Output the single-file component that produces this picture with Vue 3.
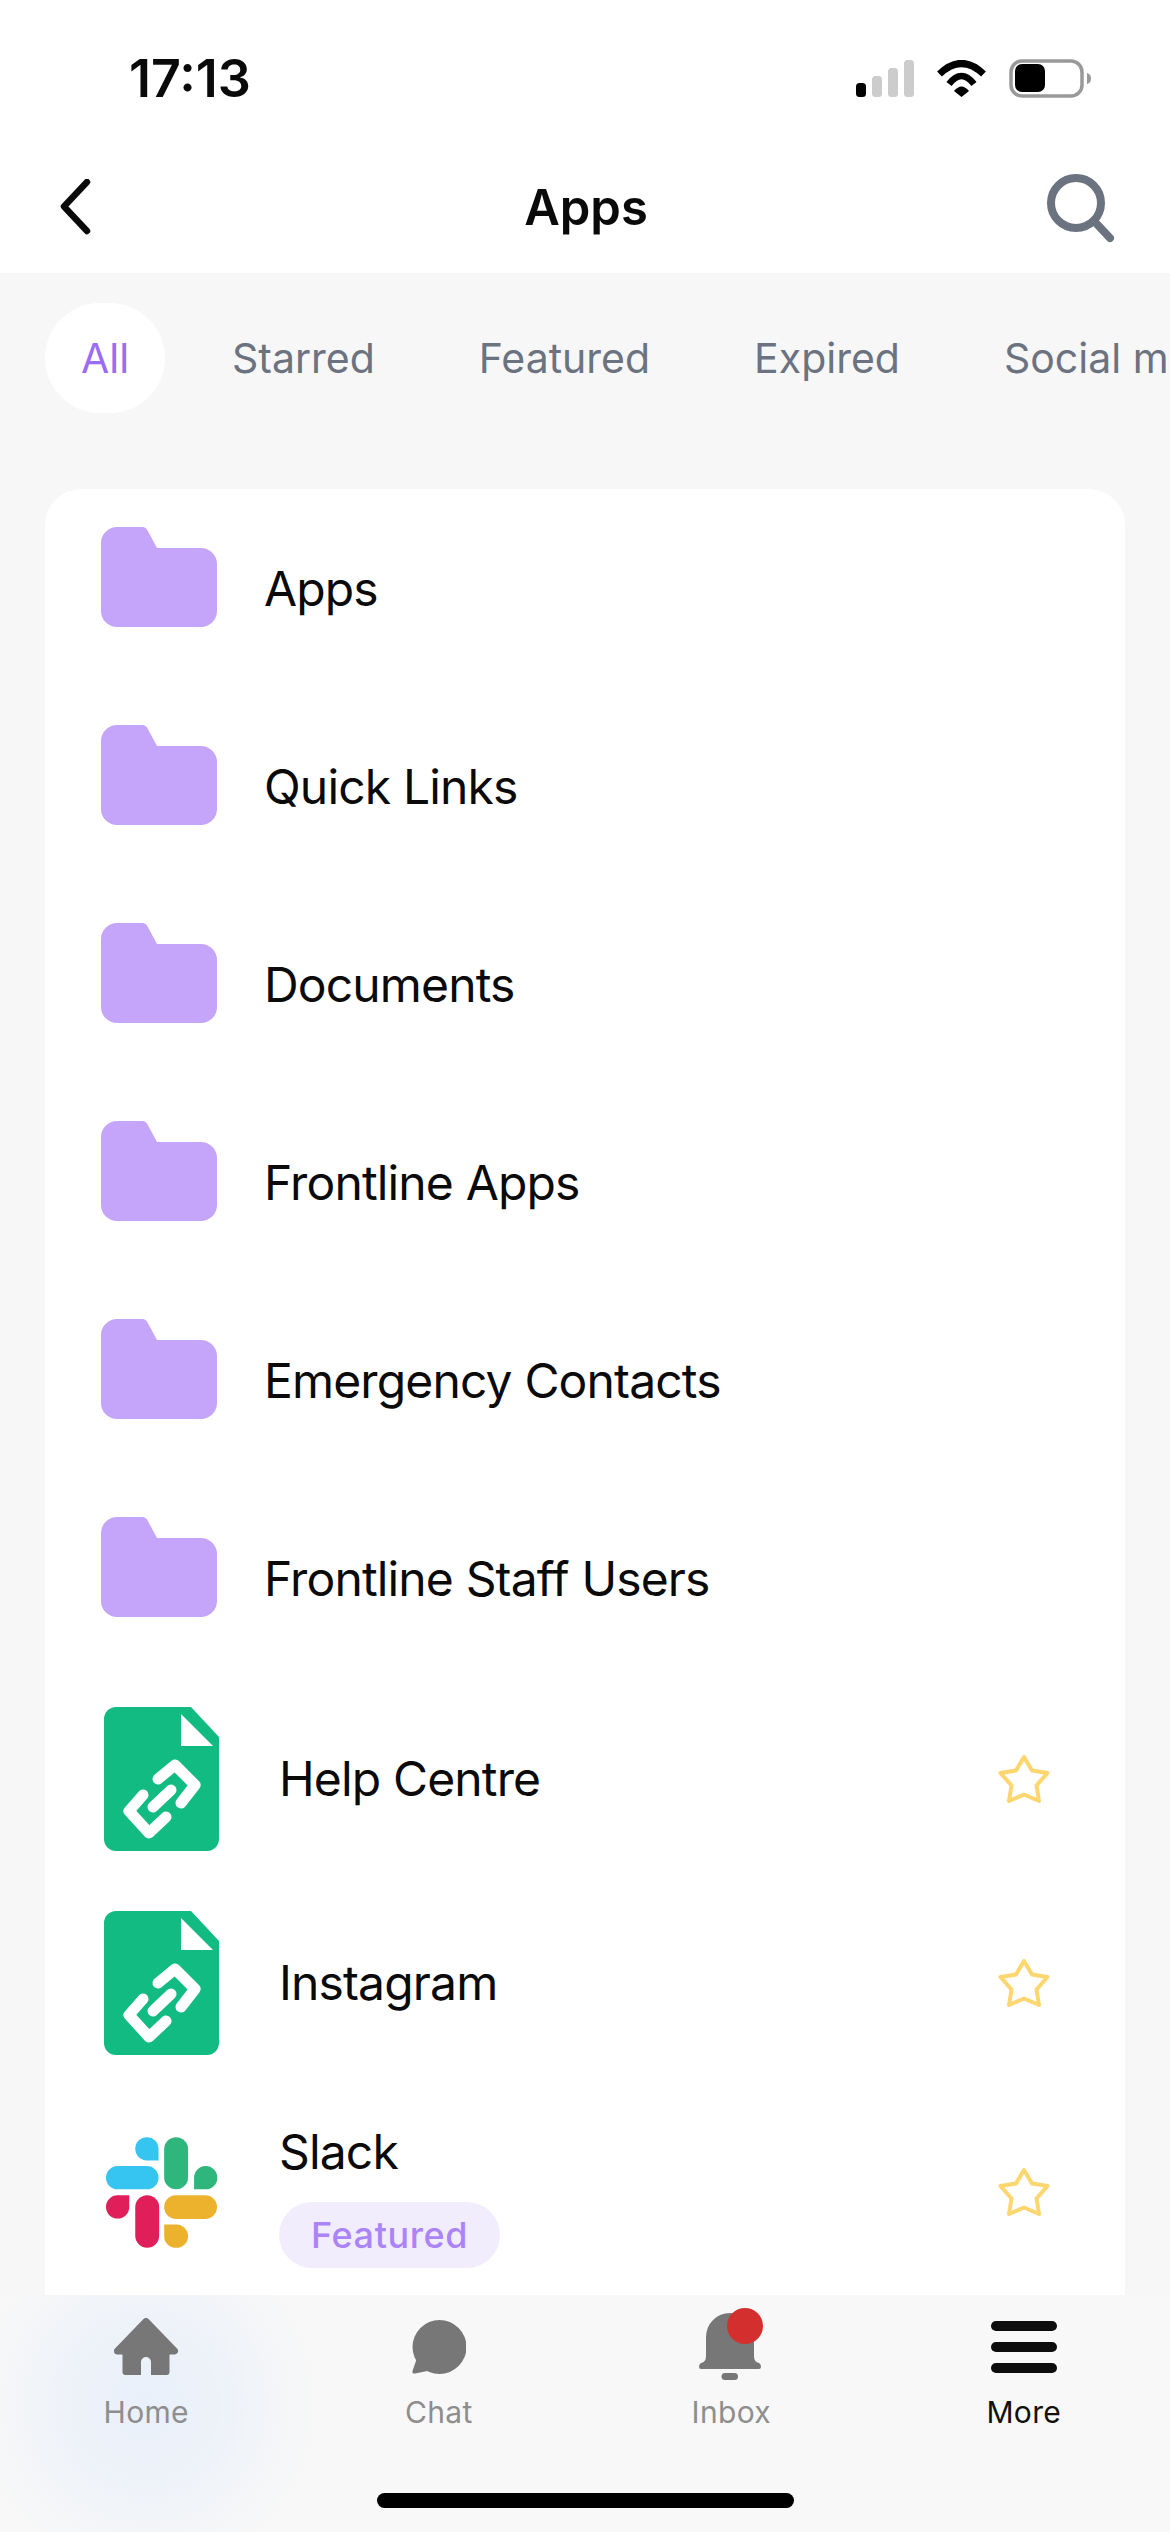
<template>
  <div class="screen">
    <div class="status">
      <span class="time">17:13</span>
      <div class="status-icons">
        <svg width="58" height="37" viewBox="0 0 58 37">
          <rect x="0" y="23" width="10" height="14" rx="3.5" fill="#000" />
          <rect x="16" y="16" width="10" height="21" rx="3.5" fill="#ccc" />
          <rect x="32" y="8" width="10" height="29" rx="3.5" fill="#ccc" />
          <rect x="48" y="0" width="10" height="37" rx="3.5" fill="#ccc" />
        </svg>
        <svg width="51" height="37" viewBox="0 0 51 37">
          <path d="M3.5 14Q25.5 -7 47.5 14" fill="none" stroke="#000" stroke-width="7" />
          <path d="M13 24Q25.5 8 38 24" fill="none" stroke="#000" stroke-width="6.5" />
          <path d="M18 31Q25.5 22 33 31L25.5 37Z" fill="#000" />
        </svg>
        <svg width="82" height="39" viewBox="0 0 82 39">
          <rect x="2" y="2" width="71" height="35" rx="11" fill="none" stroke="#999" stroke-width="3.5" />
          <rect x="6" y="5" width="30" height="28" rx="7" fill="#000" />
          <path d="M78 14Q82 15 82 19.500Q82 24 78 25Z" fill="#999" />
        </svg>
      </div>
    </div>

    <header class="topbar">
      <svg class="back" width="32" height="56" viewBox="0 0 32 56">
        <path d="M27 3L4 27.500L27 52" fill="none" stroke="#0a0a0a" stroke-width="6.500" stroke-linecap="round" stroke-linejoin="round" />
      </svg>
      <h1>Apps</h1>
      <svg class="search" width="72" height="72" viewBox="0 0 72 72">
        <circle cx="32" cy="32" r="25" fill="none" stroke="#6b7280" stroke-width="8" />
        <path d="M50 50L66 67" fill="none" stroke="#6b7280" stroke-width="8" stroke-linecap="round" />
      </svg>
    </header>

    <div class="tabs">
      <span v-for="(t, i) in tabs" :key="t" class="tab" :class="{ active: i === 0 }">{{ t }}</span>
    </div>

    <main class="card">
      <div v-for="f in folders" :key="f" class="row folder-row">
        <svg class="folder" width="116" height="100" viewBox="0 0 116 100">
          <path d="M16 0H42Q44.500 0 46 2.500L56 21H100A16 16 0 0 1 116 37V84A16 16 0 0 1 100 100H16A16 16 0 0 1 0 84V16A16 16 0 0 1 16 0Z" fill="#c4a5f9" />
        </svg>
        <span class="name">{{ f }}</span>
      </div>

      <div v-for="l in links" :key="l" class="row link-row">
        <svg width="115" height="144" viewBox="0 0 115 144">
          <path d="M12 0H87L115 30V132A12 12 0 0 1 103 144H12A12 12 0 0 1 0 132V12A12 12 0 0 1 12 0Z" fill="#12bb82" />
          <path d="M77 7V39H109Z" fill="#fff" />
          <g fill="none" stroke="#fff" stroke-width="11" stroke-linecap="round" stroke-linejoin="round">
            <path d="M54 72L71 58L91 78L77 96" />
            <path d="M39 88L25 104L45 126L62 110" />
            <path d="M67 83L49 100" />
          </g>
        </svg>
        <span class="name">{{ l }}</span>
        <svg class="star" width="54" height="52" viewBox="0 0 54 52">
          <path d="M27 4L35 17.500L50.500 20L39.500 32.500L42 48L27 41.500L12 48L14.500 32.500L3.500 20L19 17.500Z" fill="none" stroke="#fdd66f" stroke-width="4" stroke-linejoin="round" />
        </svg>
      </div>

      <div class="row slack-row">
        <svg class="slack" width="115" height="111" viewBox="74 110 346 333">
          <path d="M203 110A35 35 0 0 0 203 180H238V145A35 35 0 0 0 203 110Z" fill="#36c5f0" />
          <rect x="80" y="197" width="158" height="70" rx="35" fill="#36c5f0" />
          <rect x="255" y="110" width="72" height="157" rx="36" fill="#2eb67d" />
          <path d="M380 197A35 35 0 0 0 345 232V267H380A35 35 0 0 0 380 197Z" fill="#2eb67d" />
          <path d="M115 285A35 35 0 1 0 150 320V285Z" fill="#e01e5a" />
          <rect x="168" y="285" width="72" height="158" rx="36" fill="#e01e5a" />
          <rect x="255" y="285" width="159" height="71" rx="35.500" fill="#ecb22e" />
          <path d="M255 373V408A36 35 0 1 0 291 373Z" fill="#ecb22e" />
        </svg>
        <div class="slack-text">
          <span class="name">Slack</span>
          <span class="badge">Featured</span>
        </div>
        <svg class="star" width="54" height="52" viewBox="0 0 54 52">
          <path d="M27 4L35 17.500L50.500 20L39.500 32.500L42 48L27 41.500L12 48L14.500 32.500L3.500 20L19 17.500Z" fill="none" stroke="#fdd66f" stroke-width="4" stroke-linejoin="round" />
        </svg>
      </div>
    </main>

    <nav class="nav">
      <div class="nav-items">
        <div class="nav-item">
          <div class="nav-icon">
            <svg width="66" height="58" viewBox="0 0 66 58">
              <path d="M4.500 33L33 3.500L61.500 33Z" fill="#777" stroke="#777" stroke-width="7" stroke-linejoin="round" />
              <path d="M9.500 26H56.500V54A3 3 0 0 1 53.500 57H38V44A5 5 0 0 0 28 44V57H12.500A3 3 0 0 1 9.500 54Z" fill="#777" />
            </svg>
          </div>
          <span>Home</span>
        </div>
        <div class="nav-item">
          <div class="nav-icon">
            <svg width="54" height="54" viewBox="0 0 54 54">
              <ellipse cx="27.500" cy="27" rx="27" ry="27" fill="#777" />
              <path d="M5 38L0.500 51Q0 54 3 53.500L18 50.500Z" fill="#777" />
            </svg>
          </div>
          <span>Chat</span>
        </div>
        <div class="nav-item">
          <div class="nav-icon bell">
            <svg width="64" height="72" viewBox="0 0 64 72">
              <path d="M7 29A24 24 0 0 1 55 29V48Q55 54 60 55Q62 56 62 58.500Q62 61 60 61H2Q0 61 0 58.500Q0 56 2 55Q7 54 7 48Z" fill="#777" />
              <rect x="22.500" y="65" width="16.500" height="7" rx="3.500" fill="#777" />
              <circle cx="46" cy="18" r="18" fill="#d32f2f" />
            </svg>
          </div>
          <span>Inbox</span>
        </div>
        <div class="nav-item current">
          <div class="nav-icon burger">
            <i></i><i></i><i></i>
          </div>
          <span>More</span>
        </div>
      </div>
      <div class="home-bar"></div>
    </nav>
  </div>
</template>

<script setup>
const tabs = ['All', 'Starred', 'Featured', 'Expired', 'Social media']
const folders = ['Apps', 'Quick Links', 'Documents', 'Frontline Apps', 'Emergency Contacts', 'Frontline Staff Users']
const links = ['Help Centre', 'Instagram']
</script>

<style scoped>
.screen {
  width: 1170px;
  height: 2532px;
  display: flex;
  flex-direction: column;
  overflow: hidden;
  background: #f7f7f7;
  font-family: Inter, "Noto Sans", sans-serif;
  color: #0a0a0a;
}

.status {
  height: 156px;
  flex: none;
  background: #fff;
  display: flex;
  align-items: center;
  justify-content: space-between;
  padding: 0 79px 0 129px;
  box-sizing: border-box;
}
.time {
  font-size: 52px;
  font-weight: 600;
}
.status-icons {
  display: flex;
  align-items: center;
  gap: 22px;
}

.topbar {
  height: 117px;
  flex: none;
  background: #fff;
  display: grid;
  grid-template-columns: 1fr auto 1fr;
  align-items: center;
  padding: 0 54px 15px 56px;
  box-sizing: border-box;
}
.topbar h1 {
  margin: 0;
  font-size: 49px;
  font-weight: 600;
}
.back {
  margin-left: 4px;
}
.search {
  justify-self: end;
}

.tabs {
  flex: none;
  display: flex;
  gap: 30px;
  padding: 30px 0 76px 45px;
  overflow: hidden;
}
.tab {
  flex: none;
  height: 110px;
  line-height: 110px;
  padding: 0 37px;
  border-radius: 55px;
  font-size: 41px;
  color: #6b7280;
}
.tab.active {
  width: 120px;
  padding: 0;
  text-align: center;
  background: #fff;
  color: #9b6cf6;
}

.card {
  flex: 1;
  min-height: 0;
  margin: 0 45px;
  background: #fff;
  border-radius: 36px 36px 0 0;
  overflow: hidden;
}
.row {
  display: flex;
  align-items: center;
}
.folder-row {
  height: 198px;
  padding-left: 56px;
  gap: 47px;
}
.folder-row .name {
  margin-top: 2px;
}
.folder {
  margin-bottom: 22px;
}
.link-row {
  height: 204px;
  padding: 0 74px 0 59px;
  gap: 60px;
}
.slack-row {
  height: 214px;
  padding: 0 74px 0 59px;
  gap: 60px;
}
.name {
  font-size: 48px;
  line-height: 60px;
  letter-spacing: -0.85px;
}
.star {
  margin-left: auto;
}
.slack-text {
  display: flex;
  flex-direction: column;
  align-items: flex-start;
  gap: 20px;
  margin-top: 6px;
}
.badge {
  height: 66px;
  line-height: 66px;
  padding: 0 32px;
  border-radius: 33px;
  background: #f2edfd;
  color: #ab84f8;
  font-size: 36px;
  font-weight: 500;
  letter-spacing: 0.6px;
}

.nav {
  height: 237px;
  flex: none;
  background: radial-gradient(circle 175px at 146px 108px, #e9f0fa 0%, #edf2f9 40%, #f3f5f8 72%, #f8f8f8 100%), #f8f8f8;
}
.nav-items {
  display: grid;
  grid-template-columns: repeat(4, 1fr);
  padding-top: 17px;
}
.nav-item {
  display: flex;
  flex-direction: column;
  align-items: center;
  font-size: 30px;
  line-height: 40px;
  letter-spacing: 0.3px;
  color: #8e8e8e;
}
.nav-item.current {
  color: #111;
}
.nav-icon {
  height: 70px;
  margin-bottom: 10px;
  display: flex;
  align-items: center;
  justify-content: center;
}
.nav-icon.bell svg {
  margin-bottom: 6px;
}
.burger {
  flex-direction: column;
  gap: 11px;
}
.burger i {
  display: block;
  width: 66px;
  height: 10px;
  border-radius: 5px;
  background: #0d0d0d;
}
.home-bar {
  width: 417px;
  height: 15px;
  margin: 61px auto 0;
  border-radius: 8px;
  background: #000;
}
</style>
